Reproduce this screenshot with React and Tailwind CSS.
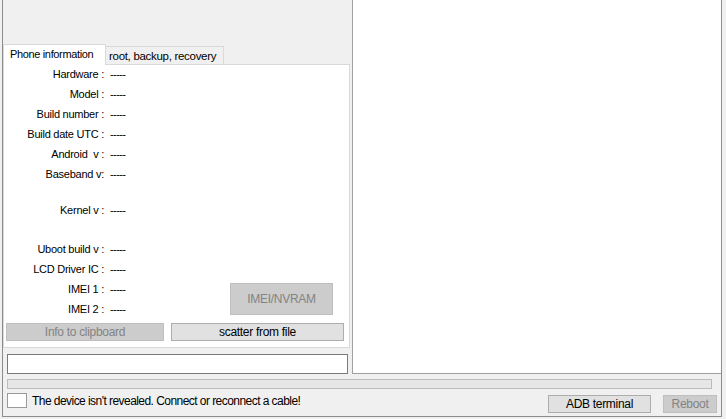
import React from "react";

const rows1 = [
  ["Hardware :", "-----"],
  ["Model :", "-----"],
  ["Build number :", "-----"],
  ["Build date UTC :", "-----"],
  ["Android  v :", "-----"],
  ["Baseband v:", "-----"],
];

function Row({ label, value, className = "" }) {
  return (
    <div className={"flex h-[20px] items-center " + className}>
      <div className="w-[100px] text-right whitespace-pre">{label}</div>
      <div className="ml-[6px] tracking-[-0.6px]">{value}</div>
    </div>
  );
}

export default function App() {
  return (
    <div
      className="w-[726px] h-[419px] bg-[#f0f0f0] overflow-hidden text-black"
      style={{ fontFamily: '"Liberation Sans", Arial, sans-serif' }}
    >
      <div className="ml-[2px] w-[720px] h-[417px] border-l border-r border-b border-[#8c8c8c] flex flex-col">
        {/* top row */}
        <div className="flex h-[374px]">
          {/* left column */}
          <div className="w-[349px] flex flex-col">
            <div className="h-[44px]" />
            {/* tabs */}
            <div className="flex items-end h-[20px] text-[11.5px] tracking-[-0.3px]">
              <div className="relative z-10 w-[103px] h-[21px] -mb-[1px] bg-white border-l border-t border-r border-[#d9d9d9] pl-[6px] pt-[1px] leading-[17px] text-[11px] tracking-[-0.35px]">
                Phone information
              </div>
              <div className="w-[118px] h-[18px] border-t border-r border-[#d9d9d9] pl-[3px] leading-[18px]">
                root, backup, recovery
              </div>
            </div>
            {/* panel */}
            <div className="w-[347px] h-[284px] bg-white border border-[#d9d9d9] flex flex-col text-[11px] tracking-[-0.25px]">
              <div className="-mt-[1px]" />
              {rows1.map(([l, v]) => (
                <Row key={l} label={l} value={v} />
              ))}
              <Row label="Kernel v :" value="-----" className="mt-[16px]" />
              <Row label="Uboot build v :" value="-----" className="mt-[19px]" />
              <Row label="LCD Driver IC :" value="-----" />
              <div className="flex">
                <div className="w-[226px] flex flex-col">
                  <Row label="IMEI 1 :" value="-----" />
                  <Row label="IMEI 2 :" value="-----" />
                </div>
                <div className="mt-[4px] w-[103px] h-[32px] bg-[#cccccc] border border-[#bfbfbf] flex items-center justify-center text-[#838383] text-[12px] tracking-[-0.3px]">
                  IMEI/NVRAM
                </div>
              </div>
              <div className="flex mt-[4px] ml-[2px] gap-[7px] text-[12px] tracking-[-0.3px]">
                <div className="w-[158px] h-[18px] bg-[#cccccc] border border-[#bfbfbf] flex items-center justify-center text-[#838383]">
                  Info to clipboard
                </div>
                <div className="w-[173px] h-[18px] bg-[#e1e1e1] border border-[#adadad] flex items-center justify-center">
                  scatter from file
                </div>
              </div>
            </div>
            <div className="mt-[6px] ml-[4px] w-[341px] h-[20px] bg-white border border-[#7a7a7a]" />
          </div>
          {/* right panel */}
          <div className="w-[369px] h-[374px] bg-white border-l border-b border-[#a0a0a0]" />
        </div>
        {/* progress bar */}
        <div className="mt-[5px] ml-[4px] w-[705px] h-[10px] bg-[#e6e6e6] border border-[#bcbcbc]" />
        {/* status row */}
        <div className="mt-[4px] flex items-start text-[12px]">
          <div className="ml-[4px] w-[20px] h-[15px] bg-white border border-[#9a9a9a]" />
          <div className="ml-[5px] mt-[1px] leading-[14px] tracking-[-0.55px]">
            The device isn't revealed. Connect or reconnect a cable!
          </div>
          <div className="ml-auto mt-[2px] w-[103px] h-[18px] bg-[#e1e1e1] border border-[#adadad] flex items-center justify-center tracking-[-0.3px]">
            ADB terminal
          </div>
          <div className="ml-[12px] mr-[4px] mt-[2px] w-[54px] h-[18px] bg-[#cccccc] border border-[#bfbfbf] flex items-center justify-center text-[#838383] tracking-[-0.3px]">
            Reboot
          </div>
        </div>
      </div>
    </div>
  );
}
